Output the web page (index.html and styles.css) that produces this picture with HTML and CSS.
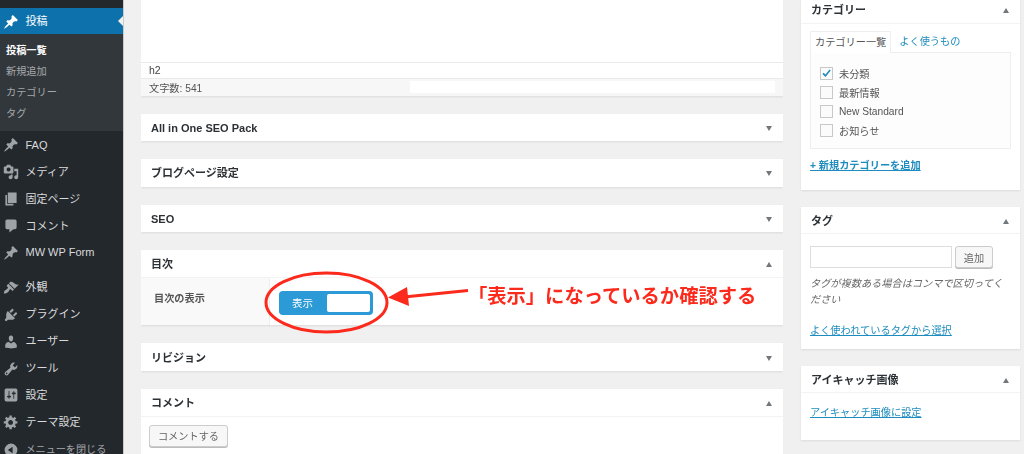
FILE: index.html
```html
<!DOCTYPE html>
<html lang="ja">
<head>
<meta charset="utf-8">
<title>投稿の編集</title>
<link rel="stylesheet" href="styles.css">
</head>
<body>
<svg class="defs" width="0" height="0" aria-hidden="true">
  <symbol id="i-pin" viewBox="0 0 20 20"><path d="M10.44 3.02l1.82-1.82 6.36 6.35-1.83 1.82c-1.05-.68-2.48-.57-3.41.36l-.75.75c-.92.93-1.04 2.35-.35 3.41l-1.83 1.82-2.41-2.41-2.8 2.79c-.42.42-3.38 2.71-3.8 2.29s1.86-3.39 2.28-3.81l2.79-2.79L4.1 9.36l1.83-1.82c1.05.69 2.48.57 3.4-.36l.75-.75c.93-.92 1.05-2.35.36-3.41z"/></symbol>
  <symbol id="i-media" viewBox="0 0 20 20"><path d="M13 11V4c0-.55-.45-1-1-1h-1.670L9 1H5L3.670 3H2c-.55 0-1 .45-1 1v7c0 .55.45 1 1 1h10c.55 0 1-.45 1-1zM7 4.500c1.380 0 2.500 1.120 2.500 2.500S8.380 9.500 7 9.500 4.500 8.380 4.500 7 5.620 4.500 7 4.500zM14 6h5v10.500c0 1.380-1.120 2.500-2.500 2.500S14 17.880 14 16.500s1.120-2.500 2.500-2.500c.17 0 .34.02.5.05V9h-3V6zm-4 8.050V13h2v3.500c0 1.380-1.120 2.500-2.500 2.500S7 17.880 7 16.500 8.120 14 9.500 14c.17 0 .34.02.5.05z"/></symbol>
  <symbol id="i-page" viewBox="0 0 20 20"><path d="M6 15V2h11v13H6zm-1 1h8v2H3V5h2v11z"/></symbol>
  <symbol id="i-comment" viewBox="0 0 20 20"><path d="M5 2h10c1.100 0 2 .9 2 2v8c0 1.100-.9 2-2 2h-2l-5 4v-4H5c-1.100 0-2-.9-2-2V4c0-1.100.9-2 2-2z"/></symbol>
  <symbol id="i-brush" viewBox="0 0 20 20"><path d="M14.480 11.060L7.410 3.990l1.500-1.500c.5-.56 2.300-.47 3.510.32 1.210.8 1.430 1.280 2.910 2.100 1.180.64 2.450 1.260 4.450.85zm-.71.71L6.700 4.700 4.930 6.470c-.39.39-.39 1.020 0 1.410l1.060 1.060c.39.39.39 1.030 0 1.420-.6.6-1.430 1.110-2.210 1.690-.35.26-.7.53-1.010.84C1.430 13.230.91 15.950 1.200 16.800c.85.29 3.570-.22 4.920-1.570.31-.31.58-.66.84-1.010.58-.78 1.090-1.610 1.690-2.210.39-.39 1.020-.39 1.410 0l1.060 1.060c.39.39 1.020.39 1.410 0z"/></symbol>
  <symbol id="i-plug" viewBox="0 0 20 20"><path d="M13.110 4.360L9.870 7.600 8 5.730l3.240-3.240c.35-.34 1.050-.2 1.560.32.52.51.66 1.210.31 1.550zm-8 1.770l.91-1.120 9.010 9.010-1.190.84c-.71.71-2.630 1.160-3.820 1.160H6.140L4.900 17.260c-.59.59-1.540.59-2.120 0-.59-.58-.59-1.530 0-2.120l1.240-1.240v-3.880c0-1.130.4-3.190 1.090-3.890zm7.260 3.970l3.240-3.240c.34-.35 1.040-.21 1.550.31.52.51.66 1.210.31 1.550l-3.240 3.250z"/></symbol>
  <symbol id="i-user" viewBox="0 0 20 20"><path d="M10 9.250c-2.270 0-2.730-3.440-2.730-3.440C7 4.020 7.820 2 9.970 2c2.160 0 2.980 2.020 2.710 3.810 0 0-.41 3.440-2.680 3.440zm0 2.570L12.720 10c2.390 0 4.520 2.330 4.520 4.530v2.490s-3.650 1.130-7.240 1.130c-3.650 0-7.240-1.130-7.240-1.130v-2.490c0-2.250 1.940-4.480 4.470-4.480z"/></symbol>
  <symbol id="i-tool" viewBox="0 0 20 20"><path d="M16.680 9.770c-1.340 1.340-3.300 1.670-4.950.99l-5.410 6.520c-.99.99-2.590.99-3.580 0s-.99-2.590 0-3.570l6.520-5.420c-.68-1.650-.35-3.610.99-4.950 1.280-1.280 3.120-1.620 4.720-1.060l-2.890 2.890 2.820 2.820 2.860-2.870c.53 1.580.18 3.390-1.080 4.650zM3.810 16.210c.4.39 1.040.39 1.430 0 .4-.4.4-1.040 0-1.430-.39-.4-1.030-.4-1.430 0-.39.39-.39 1.030 0 1.430z"/></symbol>
  <symbol id="i-set" viewBox="0 0 20 20"><path d="M18 16V4c0-1.100-.9-2-2-2H4c-1.100 0-2 .9-2 2v12c0 1.100.9 2 2 2h12c1.100 0 2-.9 2-2zM8 11h1c.55 0 1 .45 1 1s-.45 1-1 1H8v1.500c0 .28-.22.5-.5.5s-.5-.22-.5-.5V13H6c-.55 0-1-.45-1-1s.45-1 1-1h1V5.500c0-.28.22-.5.5-.5s.5.22.5.5V11zm5-2h-1c-.55 0-1-.45-1-1s.45-1 1-1h1V5.500c0-.28.22-.5.5-.5s.5.22.5.5V7h1c.55 0 1 .45 1 1s-.45 1-1 1h-1v5.500c0 .28-.22.5-.5.5s-.5-.22-.5-.5V9z"/></symbol>
  <symbol id="i-gear" viewBox="0 0 20 20"><path d="M18 12h-2.180c-.17.7-.44 1.350-.81 1.930l1.540 1.540-2.100 2.100-1.540-1.540c-.58.36-1.230.63-1.910.79V19H8v-2.180c-.68-.16-1.330-.43-1.910-.79l-1.540 1.540-2.120-2.120 1.540-1.540c-.36-.58-.63-1.230-.79-1.910H1V9.030h2.170c.16-.7.44-1.350.8-1.940L2.430 5.550l2.100-2.100 1.540 1.540c.58-.37 1.240-.64 1.930-.81V2h3v2.180c.68.16 1.330.43 1.910.79l1.540-1.540 2.120 2.120-1.540 1.540c.36.59.64 1.240.8 1.940H18V12zm-8.500 1.500c1.660 0 3-1.340 3-3s-1.340-3-3-3-3 1.340-3 3 1.340 3 3 3z"/></symbol>
  <symbol id="i-close" viewBox="0 0 20 20"><path d="M10 2a8 8 0 1 1 0 16 8 8 0 0 1 0-16zm2 4l-6 4 6 4z"/></symbol>
</svg>

<div class="page">
  <nav class="sidebar">
    <a class="menu-item current"><svg class="mi"><use href="#i-pin"/></svg><span>投稿</span></a>
    <div class="submenu">
      <a class="sub-item sub-current">投稿一覧</a>
      <a class="sub-item">新規追加</a>
      <a class="sub-item">カテゴリー</a>
      <a class="sub-item">タグ</a>
    </div>
    <a class="menu-item"><svg class="mi"><use href="#i-pin"/></svg><span>FAQ</span></a>
    <a class="menu-item"><svg class="mi"><use href="#i-media"/></svg><span>メディア</span></a>
    <a class="menu-item"><svg class="mi"><use href="#i-page"/></svg><span>固定ページ</span></a>
    <a class="menu-item"><svg class="mi"><use href="#i-comment"/></svg><span>コメント</span></a>
    <a class="menu-item"><svg class="mi"><use href="#i-pin"/></svg><span>MW WP Form</span></a>
    <div class="menu-sep"></div>
    <a class="menu-item"><svg class="mi"><use href="#i-brush"/></svg><span>外観</span></a>
    <a class="menu-item"><svg class="mi"><use href="#i-plug"/></svg><span>プラグイン</span></a>
    <a class="menu-item"><svg class="mi"><use href="#i-user"/></svg><span>ユーザー</span></a>
    <a class="menu-item"><svg class="mi"><use href="#i-tool"/></svg><span>ツール</span></a>
    <a class="menu-item"><svg class="mi"><use href="#i-set"/></svg><span>設定</span></a>
    <a class="menu-item"><svg class="mi"><use href="#i-gear"/></svg><span>テーマ設定</span></a>
    <a class="menu-item dim"><svg class="mi"><use href="#i-close"/></svg><span>メニューを閉じる</span></a>
  </nav>

  <main class="main">
    <section class="editor">
      <div class="editor-area"></div>
      <div class="editor-path">h2</div>
      <div class="editor-status"><span>文字数: 541</span><i class="status-blank"></i></div>
    </section>

    <section class="box"><header class="box-head"><h2>All in One SEO Pack</h2><i class="down"></i></header></section>
    <section class="box"><header class="box-head"><h2>ブログページ設定</h2><i class="down"></i></header></section>
    <section class="box"><header class="box-head"><h2>SEO</h2><i class="down"></i></header></section>
    <section class="box">
      <header class="box-head ruled"><h2>目次</h2><i class="up"></i></header>
      <div class="toc-row">
        <div class="toc-label">目次の表示</div>
        <div class="toc-value">
          <div class="toggle"><span class="toggle-on">表示</span><i class="toggle-knob"></i></div>
        </div>
      </div>
    </section>
    <section class="box"><header class="box-head"><h2>リビジョン</h2><i class="down"></i></header></section>
    <section class="box last">
      <header class="box-head ruled"><h2>コメント</h2><i class="up"></i></header>
      <div class="comment-body"><button class="btn comment-btn">コメントする</button></div>
    </section>
  </main>

  <aside class="side">
    <section class="sbox cat">
      <header class="sbox-head first"><h2>カテゴリー</h2><i class="up"></i></header>
      <div class="sbox-body">
        <div class="tabs"><span class="tab active">カテゴリー一覧</span><a class="tab link-plain">よく使うもの</a></div>
        <ul class="cat-list">
          <li><span class="check on"><svg viewBox="0 0 16 16"><path d="M3 8.500l1.500-1.500 2.200 2.300L11.800 3l1.400 1.200-6.400 8z"/></svg></span>未分類</li>
          <li><span class="check"></span>最新情報</li>
          <li><span class="check"></span>New Standard</li>
          <li><span class="check"></span>お知らせ</li>
        </ul>
        <a class="link add-cat">+ 新規カテゴリーを追加</a>
      </div>
    </section>

    <section class="sbox tag">
      <header class="sbox-head"><h2>タグ</h2><i class="up"></i></header>
      <div class="sbox-body">
        <div class="tag-add"><input class="tag-input" type="text"><button class="btn tag-btn">追加</button></div>
        <p class="help">タグが複数ある場合はコンマで区切ってください</p>
        <a class="link popular">よく使われているタグから選択</a>
      </div>
    </section>

    <section class="sbox thumb">
      <header class="sbox-head"><h2>アイキャッチ画像</h2><i class="up"></i></header>
      <div class="sbox-body thumb-body"><a class="link">アイキャッチ画像に設定</a></div>
    </section>
  </aside>
</div>

<svg class="annotation" width="1024" height="454" viewBox="0 0 1024 454" aria-hidden="true">
  <ellipse cx="326.500" cy="302.500" rx="60.500" ry="29.500" fill="none" stroke="#fb2a1c" stroke-width="3"/>
  <path d="M468 290.500L404 297" stroke="#fb2a1c" stroke-width="3" fill="none"/>
  <path d="M388 297.500L407 287L409 306z" fill="#fb2a1c"/>
</svg>
<p class="note">「表示」になっているか確認する</p>
</body>
</html>
```
FILE: styles.css
```css
* { box-sizing: border-box; }
html, body { margin: 0; padding: 0; height: 454px; overflow: hidden; }
body {
  position: relative;
  background: #f0f0f0;
  color: #444;
  font-family: "Liberation Sans", "Noto Sans CJK JP", sans-serif;
  font-size: 10.2px;
}
.defs { position: absolute; }
h2 { margin: 0; font-size: 11px; line-height: 1; font-weight: 700; color: #2c3136; }

.page { display: flex; align-items: flex-start; height: 454px; overflow: hidden; filter: blur(.4px); }

/* admin menu */
.sidebar {
  width: 124px;
  height: 454px;
  flex: none;
  padding-top: 8px;
  background: #23282d;
  border-right: 1px solid #c9c9c9;
  overflow: hidden;
}
.menu-item {
  position: relative;
  display: flex;
  align-items: center;
  height: 26.9px;
  padding-top: 2px;
  color: #d9dadb;
  font-size: 11px;
  line-height: 1.2;
}
.menu-item span { margin-left: 5.5px; white-space: nowrap; }
.mi { width: 16px; height: 16px; margin-left: 3px; flex: none; fill: #9ea3a8; }
.menu-item .mi { margin-right: 1px; }
.current { height: 26px; background: #0d72ab; color: #fff; }
.current .mi { fill: #fff; }
.current::after {
  content: "";
  position: absolute;
  right: 0;
  top: 8px;
  border: 5px solid transparent;
  border-right-color: #f0f0f0;
  border-left-width: 0;
}
.dim { padding-top: 3px; color: #a3a6a8; font-size: 10.1px; }
.submenu { height: 97px; padding-top: 5px; background: #32373c; }
.sub-item { display: flex; align-items: center; height: 21px; padding-left: 6px; font-size: 10.2px; color: #a4a7aa; }
.sub-current { color: #fff; font-weight: 700; }
.menu-sep { height: 8px; }

/* main column */
.main { width: 642px; height: 454px; margin-left: 17px; flex: none; overflow: hidden; }
.editor, .box, .sbox { background: #fff; box-shadow: 0 1px 2px rgba(0,0,0,.09); }
.editor { height: 96px; margin-bottom: 18px; }
.editor-area { height: 63px; border-bottom: 1px solid #eaeaea; }
.editor-path { height: 15px; padding-left: 8px; line-height: 15px; font-size: 10.5px; color: #444; }
.editor-status {
  display: flex;
  align-items: center;
  height: 18px;
  padding: 0 8px 1px 8px;
  background: #f7f7f7;
  border-top: 1px solid #eaeaea;
  color: #555;
}
.status-blank { display: block; width: 365px; height: 12px; margin-left: auto; background: #fff; }
.box { margin-bottom: 18px; }
.box.last { margin-bottom: 0; }
.box-head { display: flex; align-items: center; justify-content: space-between; height: 27.33px; padding: 2px 11px 0 10px; }
.ruled { height: 28px; border-bottom: 1px solid #f3f3f3; }
.down, .up { display: block; width: 0; height: 0; border: 3.5px solid transparent; border-left-width: 3px; border-right-width: 3px; }
.down { border-top: 5px solid #72777c; border-bottom-width: 0; }
.up { border-bottom: 5px solid #72777c; border-top-width: 0; }
.toc-row { display: flex; height: 47.5px; }
.toc-label { width: 129px; padding: 12.5px 0 0 13px; background: #f9f9f9; border-right: 1px solid #eee; font-weight: 700; color: #555; }
.toc-value { padding: 13px 0 0 9px; }
.toggle { display: flex; width: 94px; height: 24px; padding: 3px; background: #2b9ad6; border-radius: 4px; justify-content: space-between; align-items: center; }
.toggle-on { margin-left: 10px; color: #fff; font-size: 10.5px; }
.toggle-knob { display: block; width: 43px; height: 18px; background: #fff; border-radius: 2px; }
.comment-body { height: 37px; padding: 8px 8px 0; }
.btn {
  padding: 0;
  font: inherit;
  font-size: 10.2px;
  color: #666;
  background: #f7f7f7;
  border: 1px solid #ccc;
  border-radius: 3px;
  box-shadow: 0 1px 0 #bbb;
}
.comment-btn { width: 79px; height: 22px; }

/* right column */
.side { width: 219px; margin-left: 18px; flex: none; }
.sbox { margin-bottom: 17px; }
.sbox-head { display: flex; align-items: center; justify-content: space-between; height: 27px; padding: 2px 11px 0 10px; border-bottom: 1px solid #f3f3f3; }
.sbox-head.first { height: 24px; padding: 0 11px 3px 10px; }
.sbox-body { padding: 0 9px; }
.cat { height: 190px; }
.tabs { display: flex; margin-top: 7px; height: 21px; }
.tab { padding: 4px 4px 0; line-height: 13px; white-space: nowrap; }
.active { position: relative; z-index: 1; height: 22px; background: #fff; border: 1px solid #eee; border-bottom: 0; color: #555; }
.link-plain { color: #1e8cbe; padding-left: 8px; }
.cat-list {
  margin: 0;
  height: 97px;
  padding: 11px 0 0 9px;
  list-style: none;
  background: #fdfdfd;
  border: 1px solid #eee;
}
.cat-list li { display: flex; align-items: center; height: 19px; color: #555; }
.check { display: block; width: 13px; height: 13px; margin-right: 6px; background: #fbfbfb; border: 1px solid #c8c8c8; }
.check svg { display: block; width: 13px; height: 13px; margin: -1px 0 0 -1px; fill: #1e8cbe; }
.link { color: #1e8cbe; text-decoration: underline; }
.add-cat { display: block; margin-top: 8px; font-weight: 700; }
.tag { height: 142px; }
.tag-add { display: flex; margin-top: 12px; }
.tag-input { width: 142px; height: 22px; padding: 0; background: #fff; border: 1px solid #ddd; }
.tag-btn { width: 38px; height: 22px; margin-left: 3px; }
.help { margin: 8px 0 0; font-style: italic; line-height: 15.5px; color: #666; }
.popular { display: block; margin-top: 15px; }
.thumb { height: 74px; }
.thumb-body { padding-top: 11px; }

/* annotation drawn over the screenshot */
.annotation { position: absolute; left: 0; top: 0; pointer-events: none; filter: blur(.4px); }
.note {
  position: absolute;
  left: 468px;
  top: 282px;
  margin: 0;
  font-size: 19.3px;
  line-height: 26px;
  font-weight: 700;
  color: #fb2a1c;
  white-space: nowrap;
  font-family: "Noto Sans CJK JP", sans-serif;
  filter: blur(.4px);
}
```
